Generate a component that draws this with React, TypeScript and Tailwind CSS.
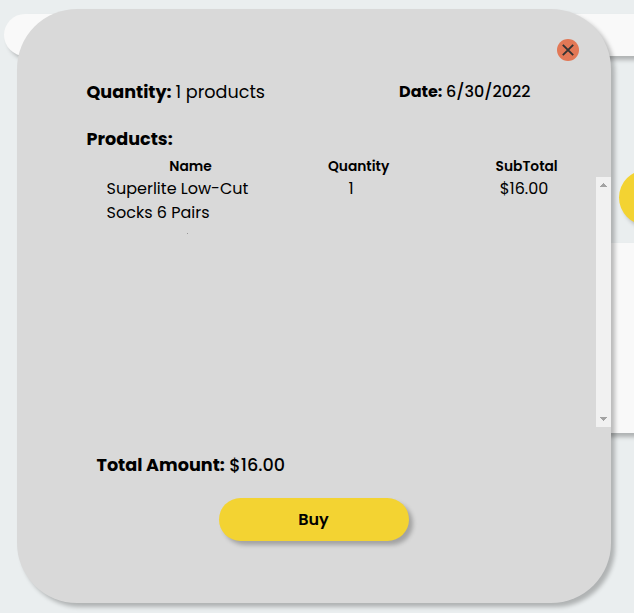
const shadow = "shadow-[4px_4px_4px_rgba(0,0,0,0.25)]";

function Backdrop() {
  return (
    <div className="flex h-full flex-col pt-[14px]">
      <div className={`ml-1 h-[42px] w-[700px] shrink-0 rounded-full bg-[#f9f9f9] ${shadow}`} />
      <div className={`mt-[114px] ml-[619px] size-[55px] shrink-0 rounded-full bg-[#f3d332] ${shadow}`} />
      <div className={`mt-[18px] ml-[300px] h-[190px] w-[400px] shrink-0 bg-[#f9f9f9] ${shadow}`} />
    </div>
  );
}

function ScrollBar() {
  return (
    <div className="flex h-[250px] w-[15px] flex-col items-center justify-between bg-[#f1f1f1] py-[6px]">
      <svg width="7" height="4" viewBox="0 0 7 4" fill="#a3a3a3" shapeRendering="crispEdges">
        <path d="M3 0h1v1h1v1h1v1h1v1H0V3h1V2h1V1h1z" />
      </svg>
      <svg width="7" height="4" viewBox="0 0 7 4" fill="#a3a3a3" shapeRendering="crispEdges">
        <path d="M0 0h7v1H6v1H5v1H4v1H3V3H2V2H1V1H0z" />
      </svg>
    </div>
  );
}

export default function App() {
  return (
    <div className="relative h-[613px] w-[634px] overflow-hidden bg-[#eaeeef] font-['Poppins','Inter',sans-serif] text-black">
      <Backdrop />
      <div className="absolute top-[9px] left-[17px] flex size-[594px] flex-col rounded-[60px] bg-[#d9d9d9] shadow-[4px_4px_4px_rgba(0,0,0,0.25)]">
        <div className="flex h-[69px] shrink-0 justify-end pt-[30px] pr-8">
          <button aria-label="Close" className="flex size-[22px] items-center justify-center rounded-full bg-[#e27856]">
            <svg width="12" height="12" viewBox="0 0 12 12" stroke="#333" strokeWidth="1.9">
              <path d="M.8.8l10.4 10.4M11.2.8L.8 11.2" />
            </svg>
          </button>
        </div>
        <div className="flex h-[27px] shrink-0 items-start whitespace-nowrap">
          <p className="ml-[69.5px] w-[312.5px] text-[17.6px] leading-[29px]">
            <b className="-mr-[0.8px]">Quantity:</b> 1 products
          </p>
          <p className="text-[16px] leading-[27px] font-medium">
            <b className="-mr-[0.5px]">Date:</b> 6/30/2022
          </p>
        </div>
        <h2 className="mt-5 ml-[69.5px] h-[27px] shrink-0 text-[17.6px] leading-[29px] font-bold">Products:</h2>
        <div className="mt-[4px] flex h-[21px] shrink-0 text-[13.8px] leading-[21px] font-semibold">
          <span className="ml-[89.6px] w-[168px] text-center">Name</span>
          <span className="w-[168px] text-center">Quantity</span>
          <span className="w-[168px] text-center">SubTotal</span>
        </div>
        <div className="flex h-[250px] shrink-0 justify-between">
          <div className="flex text-[16px] leading-6">
            <div className="ml-[89.6px] w-[167.4px] whitespace-nowrap">
              <div>Superlite Low-Cut</div>
              <div>Socks 6 Pairs</div>
              <div className="mt-[8px] ml-[80.4px] h-px w-px bg-[#999]" />
            </div>
            <span className="w-[154px] text-center">1</span>
            <span className="w-[168px] pl-[24px] text-center">$16.00</span>
          </div>
          <ScrollBar />
        </div>
        <p className="mt-6 ml-[79.5px] h-[27px] shrink-0 text-[17.6px] leading-[29px] font-medium">
          <b>Total Amount:</b> $16.00
        </p>
        <button className={`mt-[20px] ml-[202px] h-[43px] w-[190px] shrink-0 rounded-full bg-[#f3d332] pr-px text-[16px] font-semibold ${shadow}`}>Buy</button>
      </div>
    </div>
  );
}
